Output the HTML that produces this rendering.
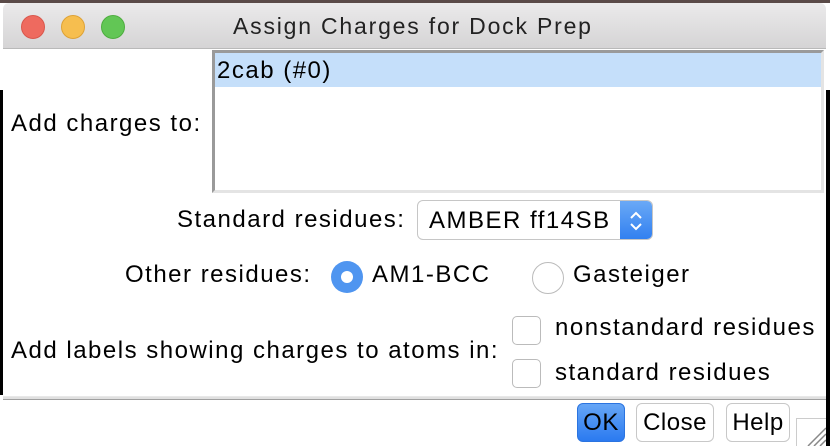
<!DOCTYPE html>
<html><head><meta charset="utf-8"><style>
*{margin:0;padding:0;box-sizing:border-box}
body{width:830px;height:446px;overflow:hidden;background:#fff;font-family:"Liberation Sans",sans-serif;font-size:24px;color:#000;position:relative;letter-spacing:1.5px}
.a{position:absolute;white-space:nowrap;line-height:26px}
.dot{position:absolute;width:24px;height:24px;border-radius:50%;top:15px}
.cb{position:absolute;width:29px;height:29px;border:1px solid #bbb;border-radius:5px;background:#fff}
.btn{position:absolute;top:403px;height:39px;border:1px solid #c8c8c8;border-radius:6px;background:#fff;text-align:center;line-height:37px;font-size:24px;letter-spacing:0.5px}
</style></head><body>
<div style="position:absolute;left:0;top:0;width:830px;height:3px;background:#5a4a48"></div>
<div style="position:absolute;left:3px;top:3px;width:823px;height:46px;background:linear-gradient(#ebeaeb,#d5d4d5);border-bottom:1px solid #b9b9b9;border-radius:6px 6px 0 0"></div>
<div class="dot" style="left:21px;background:#ee6a5f;border:1px solid #d9574c"></div>
<div class="dot" style="left:61px;background:#f6be4f;border:1px solid #dea236"></div>
<div class="dot" style="left:101px;background:#62c655;border:1px solid #4ead3f"></div>
<div class="a" style="left:233px;top:13px;color:#222;font-size:23px;letter-spacing:1.8px">Assign Charges for Dock Prep</div>
<div style="position:absolute;left:0;top:90px;width:3px;height:305px;background:#000"></div>
<div style="position:absolute;left:826px;top:90px;width:4px;height:356px;background:#000"></div>
<div style="position:absolute;left:212px;top:50px;width:612px;height:143px;border-top:3px solid #9a9a9a;border-left:3px solid #9a9a9a;border-right:3px solid #e4e4e4;border-bottom:3px solid #e4e4e4;background:#fff"></div>
<div style="position:absolute;left:215px;top:53px;width:606px;height:34px;background:#c5dffa"></div>
<div class="a" style="left:217px;top:58px">2cab (#0)</div>
<div class="a" style="left:11px;top:111px">Add charges to:</div>
<div class="a" style="left:177px;top:207px">Standard residues:</div>
<div style="position:absolute;left:417px;top:200px;width:236px;height:40px;border:1px solid #c6c6c6;border-radius:6px;background:#fff;overflow:hidden">
<div style="position:absolute;right:0;top:0;width:32px;height:40px;background:linear-gradient(#6aa9f6,#2f7ef0)"></div>
<svg style="position:absolute;right:7px;top:8px" width="18" height="24" viewBox="0 0 18 24"><path d="M4 9 L9 4 L14 9 M4 15 L9 20 L14 15" fill="none" stroke="#fff" stroke-width="2"/></svg></div>
<div class="a" style="left:429px;top:208px">AMBER ff14SB</div>
<div class="a" style="left:125px;top:262px">Other residues:</div>
<div style="position:absolute;left:331px;top:261px;width:32px;height:32px;border-radius:50%;background:#4f95f0"></div>
<div style="position:absolute;left:341px;top:271px;width:12px;height:12px;border-radius:50%;background:#fff"></div>
<div class="a" style="left:372px;top:262px">AM1-BCC</div>
<div style="position:absolute;left:532px;top:262px;width:32px;height:32px;border-radius:50%;border:1px solid #bbb;background:#fff"></div>
<div class="a" style="left:573px;top:262px">Gasteiger</div>
<div class="a" style="left:11px;top:338px">Add labels showing charges to atoms in:</div>
<div class="cb" style="left:512px;top:316px"></div>
<div class="a" style="left:555px;top:315px">nonstandard residues</div>
<div class="cb" style="left:512px;top:359px"></div>
<div class="a" style="left:555px;top:360px">standard residues</div>
<div style="position:absolute;left:3px;top:396px;width:823px;height:4px;background:#e0e0e0;border-top:1px solid #e8e8e8;border-bottom:1px solid #a0a0a0"></div>
<div class="btn" style="left:577px;width:48px;background:linear-gradient(#66a6f6,#2b7af0);border-color:#2b74e0">OK</div>
<div class="btn" style="left:636px;width:78px">Close</div>
<div class="btn" style="left:726px;width:64px">Help</div>
<div style="position:absolute;left:796px;top:418px;width:30px;height:28px;border-top:1px solid #ccc;border-left:1px solid #ccc;background:#fff"></div>
<svg style="position:absolute;left:796px;top:418px" width="30" height="28"><path d="M12 28 L30 10 M18 28 L30 16 M24 28 L30 22" stroke="#888" stroke-width="1.5"/></svg>
</body></html>
